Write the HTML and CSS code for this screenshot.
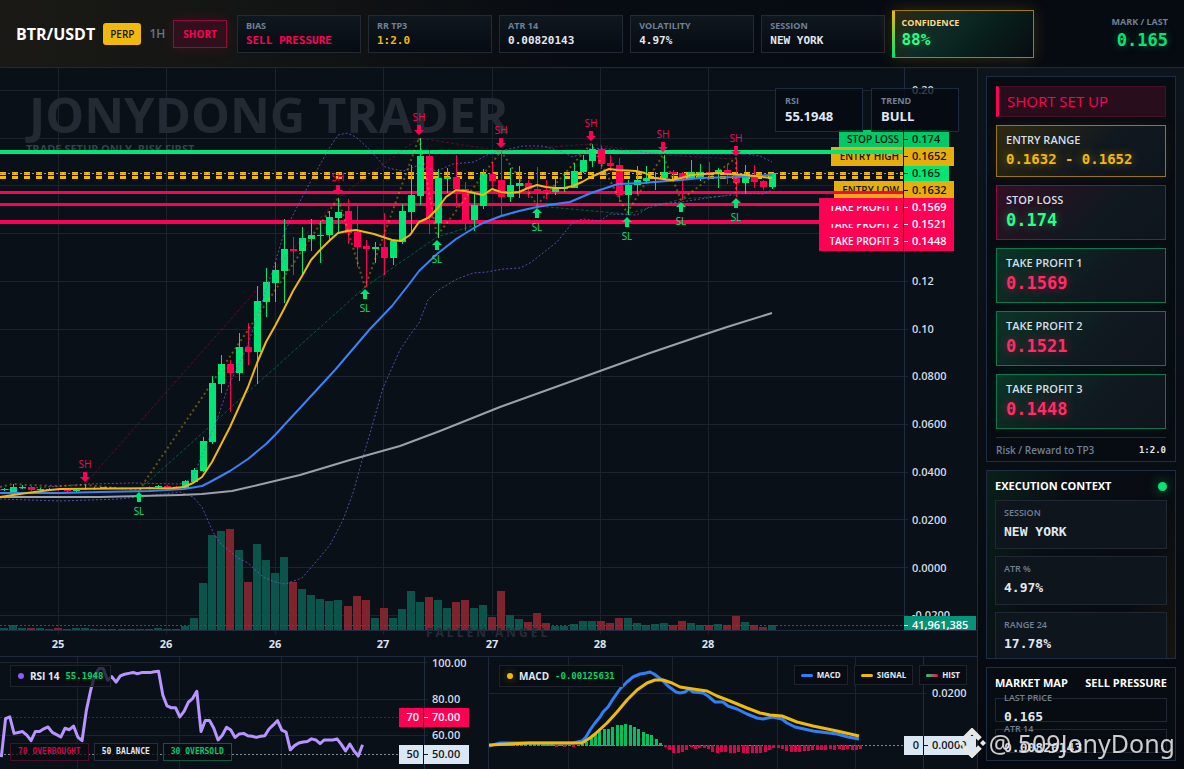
FILE: index.html
```html
<!DOCTYPE html>
<html lang="en">
<head>
    <meta charset="UTF-8">
    <meta name="viewport" content="width=device-width, initial-scale=1.0">
    <title>BTR/USDT Trader</title>
    <link rel="stylesheet" href="styles.css">
</head>
<body>
    <header class="topbar">
        <div class="brand">
            <h1 class="pair">BTR/USDT</h1>
            <span class="perp">PERP</span>
            <span class="timeframe">1H</span>
            <span class="side">SHORT</span>
        </div>
        <div class="stats">
            <div class="stat"><span class="label">BIAS</span><b class="red">SELL PRESSURE</b></div>
            <div class="stat"><span class="label">RR TP3</span><b class="yellow">1:2.0</b></div>
            <div class="stat"><span class="label">ATR 14</span><b>0.00820143</b></div>
            <div class="stat"><span class="label">VOLATILITY</span><b>4.97%</b></div>
            <div class="stat"><span class="label">SESSION</span><b>NEW YORK</b></div>
            <div class="stat confidence"><span class="label">CONFIDENCE</span><b>88%</b></div>
        </div>
        <div class="last">
            <span class="label">MARK / LAST</span>
            <b>0.165</b>
        </div>
    </header>

    <main class="layout">
        <section class="left">
            <div class="chart">
                <svg id="price-chart" viewBox="0 0 977 588" preserveAspectRatio="xMinYMin meet"></svg>
                <div class="readouts">
                    <div class="readout"><span class="label">RSI</span><b>55.1948</b></div>
                    <div class="readout"><span class="label">TREND</span><b>BULL</b></div>
                </div>
            </div>
            <div class="indicators">
                <div class="pane">
                    <svg id="rsi-chart" viewBox="0 0 488 112" preserveAspectRatio="xMinYMin meet"></svg>
                    <div class="pane-title"><i class="dot purple-dot"></i>RSI 14 <b>55.1948</b></div>
                    <div class="levels">
                        <span class="level overbought">70 OVERBOUGHT</span>
                        <span class="level">50 BALANCE</span>
                        <span class="level oversold">30 OVERSOLD</span>
                    </div>
                </div>
                <div class="pane macd">
                    <svg id="macd-chart" viewBox="0 0 488 112" preserveAspectRatio="xMinYMin meet"></svg>
                    <div class="pane-title"><i class="dot yellow-dot"></i>MACD <b>-0.00125631</b></div>
                    <div class="legend">
                        <span><i class="key key-macd"></i>MACD</span>
                        <span><i class="key key-signal"></i>SIGNAL</span>
                        <span><i class="key key-hist"></i>HIST</span>
                    </div>
                </div>
            </div>
        </section>

        <aside class="sidebar">
            <section class="panel setup">
                <h2 class="setup-title">SHORT SET UP</h2>
                <div class="card entry"><span>ENTRY RANGE</span><b>0.1632 - 0.1652</b></div>
                <div class="card stop"><span>STOP LOSS</span><b>0.174</b></div>
                <div class="card profit"><span>TAKE PROFIT 1</span><b>0.1569</b></div>
                <div class="card profit"><span>TAKE PROFIT 2</span><b>0.1521</b></div>
                <div class="card profit"><span>TAKE PROFIT 3</span><b>0.1448</b></div>
                <div class="risk"><span>Risk / Reward to TP3</span><b>1:2.0</b></div>
            </section>
            <section class="panel context">
                <div class="panel-head"><h3>EXECUTION CONTEXT</h3><i class="live"></i></div>
                <div class="box"><span>SESSION</span><b>NEW YORK</b></div>
                <div class="box"><span>ATR %</span><b>4.97%</b></div>
                <div class="box"><span>RANGE 24</span><b>17.78%</b></div>
            </section>
            <section class="panel market">
                <div class="panel-head"><h3>MARKET MAP</h3><h3>SELL PRESSURE</h3></div>
                <div class="box"><span>LAST PRICE</span><b>0.165</b></div>
                <div class="box"><span>ATR 14</span><b>0.00820143</b></div>
            </section>
        </aside>
    </main>

    <div class="handle">
        <svg width="28" height="30" viewBox="0 0 28 30">
            <path d="M6 11 L14 3 L22 11 M6 19 L14 27 L22 19" fill="none" stroke="#e8e8e8" stroke-width="5"/>
            <path d="M14 11 L18 15 L14 19 L10 15 Z M3 12 L6 15 L3 18 L0 15 Z M25 12 L28 15 L25 18 L22 15 Z" fill="#e8e8e8"/>
        </svg>
        <span>@ 509JonyDong</span>
    </div>

    <script src="chart.js"></script>
</body>
</html>
```

FILE: styles.css
```css
* {
    box-sizing: border-box;
}

body {
    margin: 0;
    height: 100vh;
    display: grid;
    grid-template-rows: 68px minmax(0, 1fr);
    background: #060a11;
    color: #e2e8f0;
    font-family: "Trebuchet MS", "Open Sans", "Noto Sans", sans-serif;
    font-size: 11px;
    overflow: hidden;
}

h1, h2, h3 {
    margin: 0;
}

.label {
    color: #718096;
    font-size: 9px;
    line-height: 12px;
    font-weight: 700;
}

.red { color: #ff0055; }
.yellow { color: #f0b90b; }

/* Top bar */
.topbar {
    display: grid;
    grid-template-columns: auto minmax(0, 1fr) 124px;
    align-items: center;
    gap: 10px;
    padding: 0 16px;
    border-bottom: 1px solid #1f293d;
    background: linear-gradient(90deg, #1a1915 0%, #131514 22%, #070b12 50%, #060a11 100%);
}

.brand {
    display: flex;
    align-items: center;
    gap: 8px;
}

.pair {
    color: #fff;
    font-size: 16px;
    font-weight: 700;
}

.perp {
    padding: 0 7px;
    border-radius: 3px;
    background: #f0b90b;
    color: #15130a;
    font-size: 10px;
    font-weight: 600;
    line-height: 22px;
}

.timeframe {
    color: #64748b;
    font-size: 12px;
    font-weight: 600;
}

.side {
    padding: 0 9px;
    border: 1px solid #98093d;
    background: #31101d;
    color: #ff0055;
    font-size: 10px;
    font-weight: 700;
    line-height: 26px;
    box-shadow: 0 0 14px rgba(255, 0, 85, 0.15);
}

.stats {
    display: grid;
    grid-template-columns: repeat(5, minmax(0, 1fr)) minmax(0, 1.14fr);
    align-items: center;
    gap: 7px;
}

.stat {
    display: flex;
    flex-direction: column;
    height: 38px;
    padding: 4px 8px;
    border: 1px solid #232a36;
    background: linear-gradient(180deg, #0f171f, #070b12);
}

.stat b {
    font-family: "DejaVu Sans Mono", monospace;
    font-size: 11px;
    line-height: 18px;
}

.confidence {
    height: 48px;
    padding: 6px 8px 6px 6px;
    border: 1px solid #a07c10;
    border-left: 3px solid #a07c10;
    background: linear-gradient(135deg, #2f2813 0%, #0f2b26 35%, #08201c 60%, #080c12 100%);
    box-shadow: 0 0 16px rgba(240, 185, 11, 0.2);
    position: relative;
}

.confidence::before {
    content: "";
    position: absolute;
    inset: 0 auto 0 -3px;
    width: 3px;
    background: linear-gradient(180deg, #f0b90b, #00e676);
}

.confidence .label {
    color: #ffd980;
}

.confidence b {
    color: #2bff88;
    font-size: 16px;
    line-height: 22px;
    text-shadow: 0 0 8px rgba(0, 230, 118, 0.4);
}

.last {
    display: flex;
    flex-direction: column;
    align-items: flex-end;
}

.last b {
    color: #00e676;
    font-family: "DejaVu Sans Mono", monospace;
    font-size: 17px;
    line-height: 24px;
    text-shadow: 0 0 10px rgba(0, 230, 118, 0.4);
}

/* Layout */
.layout {
    display: grid;
    grid-template-columns: minmax(0, 1fr) 207px;
    min-height: 0;
}

.left {
    display: grid;
    grid-template-rows: minmax(0, 1fr) 113px;
    min-height: 0;
    background: #0a1018;
}

.chart, .pane {
    position: relative;
    min-width: 0;
    min-height: 0;
    overflow: hidden;
}

.chart svg, .pane svg {
    display: block;
    width: 100%;
    height: 100%;
}

.readouts {
    position: absolute;
    top: 20px;
    right: 18px;
    display: flex;
    gap: 8px;
}

.readout {
    display: flex;
    flex-direction: column;
    width: 88px;
    height: 44px;
    padding: 6px 9px;
    border: 1px solid #1e2a3d;
    background: rgba(6, 9, 17, 0.75);
}

.readout b {
    font-size: 13px;
    line-height: 18px;
}

.indicators {
    display: grid;
    grid-template-columns: minmax(0, 488fr) minmax(0, 489fr);
    border-top: 1px solid #1f293d;
}

.macd {
    border-left: 1px solid #1f293d;
}

.pane-title {
    position: absolute;
    top: 8px;
    left: 10px;
    display: flex;
    align-items: center;
    gap: 6px;
    padding: 0 7px;
    border: 1px solid #1e242d;
    background: rgba(8, 12, 18, 0.75);
    font-size: 10px;
    font-weight: 700;
    line-height: 20px;
}

.pane-title b {
    color: #00d66b;
    font-family: "DejaVu Sans Mono", monospace;
    font-size: 9px;
}

.dot {
    width: 6px;
    height: 6px;
    border-radius: 50%;
}

.purple-dot { background: #8b5cf6; }
.yellow-dot {
    background: #f0b90b;
    box-shadow: 0 0 8px rgba(240, 185, 11, 0.5);
}

.levels {
    position: absolute;
    left: 10px;
    bottom: 8px;
    display: flex;
    gap: 5px;
}

.level {
    padding: 0 7px;
    border: 1px solid #262d38;
    background: rgba(8, 12, 18, 0.75);
    font-family: "DejaVu Sans Mono", monospace;
    font-size: 8px;
    font-weight: 700;
    line-height: 16px;
}

.overbought {
    border-color: #4a0e28;
    color: #c8064a;
}

.oversold {
    border-color: #0b5a3a;
    color: #00c968;
}

.legend {
    position: absolute;
    top: 8px;
    right: 10px;
    display: flex;
    gap: 6px;
}

.legend span {
    display: flex;
    align-items: center;
    gap: 4px;
    padding: 0 6px;
    border: 1px solid #1e242d;
    background: #080c12;
    font-size: 8px;
    font-weight: 700;
    line-height: 18px;
}

.key {
    width: 12px;
    height: 3px;
    border-radius: 2px;
}

.key-macd { background: #2f81f7; }
.key-signal { background: #f0b90b; }
.key-hist { background: linear-gradient(90deg, #00e676, #ff0055); }

/* Sidebar */
.sidebar {
    display: grid;
    grid-template-rows: auto minmax(0, 2fr) minmax(0, 1fr);
    gap: 8px;
    min-height: 0;
    padding: 8px;
    border-left: 1px solid #1f293d;
    background: linear-gradient(180deg, #0d141c, #05080f);
}

.panel {
    min-height: 0;
    border: 1px solid #1f2d44;
    background: #070b12;
    overflow: hidden;
}

.setup {
    display: flex;
    flex-direction: column;
    gap: 8px;
    padding: 9px 9px 3px;
}

.setup-title {
    padding-left: 8px;
    border: 1px solid #47102a;
    border-left: 3px solid #ff0055;
    background: #280d1c;
    color: #ff0055;
    font-size: 15px;
    font-weight: 500;
    line-height: 29px;
}

.card {
    display: flex;
    flex-direction: column;
    padding: 5px 9px 6px;
    border: 1px solid;
}

.card span {
    color: #d5deea;
    font-size: 11px;
    font-weight: 600;
    line-height: 17px;
}

.card b {
    font-family: "DejaVu Sans Mono", monospace;
    font-size: 17px;
    line-height: 25px;
}

.entry {
    border-color: #98770f;
    background: linear-gradient(135deg, #30290f 0%, #101820 60%, #0e151d 100%);
    box-shadow: 0 0 14px rgba(240, 185, 11, 0.08);
}

.entry b {
    color: #f0b90b;
    font-size: 14px;
    line-height: 22px;
    text-shadow: 0 0 10px rgba(240, 185, 11, 0.5);
}

.stop {
    border-color: #8d0c3c;
    background: linear-gradient(135deg, #321023 0%, #101820 60%, #0e151d 100%);
}

.stop b {
    color: #2bff88;
    text-shadow: 0 0 10px rgba(0, 230, 118, 0.5);
}

.profit {
    border-color: #0a7a4b;
    background: linear-gradient(135deg, #0b3526 0%, #101820 60%, #0e151d 100%);
    box-shadow: 0 0 14px rgba(0, 230, 118, 0.06);
}

.profit b {
    color: #ff2d64;
    text-shadow: 0 0 10px rgba(255, 0, 85, 0.5);
}

.risk {
    display: flex;
    justify-content: space-between;
    align-items: center;
    padding-top: 4px;
    border-top: 1px solid #1f2d44;
    color: #718096;
    font-size: 10px;
    font-weight: 600;
    line-height: 16px;
}

.risk b {
    color: #e2e8f0;
    font-family: "DejaVu Sans Mono", monospace;
    font-size: 9px;
}

.context, .market {
    padding: 7px 8px;
}

.context {
    background: linear-gradient(110deg, #08201a 0%, #080e14 35%, #080c12 75%, #17140d 100%);
}

.panel-head {
    display: flex;
    justify-content: space-between;
    align-items: center;
    margin-bottom: 6px;
}

.panel-head h3 {
    color: #fff;
    font-size: 11px;
    font-weight: 700;
    line-height: 16px;
}

.live {
    width: 9px;
    height: 9px;
    border-radius: 50%;
    background: #00e676;
    box-shadow: 0 0 12px rgba(0, 230, 118, 0.5);
}

.box {
    display: flex;
    flex-direction: column;
    justify-content: center;
    height: 49px;
    margin-bottom: 7px;
    padding: 0 8px 4px;
    border: 1px solid #212833;
    background: #0e151d;
}

.box span {
    color: #718096;
    font-size: 9px;
    font-weight: 600;
    line-height: 18px;
}

.box b {
    font-family: "DejaVu Sans Mono", monospace;
    font-size: 13px;
    line-height: 20px;
}

.market {
    display: grid;
    grid-template-rows: auto minmax(0, 1fr) minmax(0, 1fr);
    gap: 7px;
}

.market .panel-head {
    margin: 0;
}

.market .box {
    height: auto;
    min-height: 0;
    margin: 0;
    background: transparent;
}

/* Author handle floating over the page corner */
.handle {
    position: fixed;
    right: 9px;
    bottom: 9px;
    display: flex;
    align-items: center;
    gap: 3px;
    color: rgba(255, 255, 255, 0.8);
    font-family: "Noto Sans", sans-serif;
    font-size: 25px;
    line-height: 34px;
    text-shadow: 0 0 2px rgba(0, 0, 0, 0.6);
}
```

FILE: chart.js
```js
const GREEN = '#00e676';
const RED = '#ff0055';
const YELLOW = '#f0b90b';
const FONT = '"Trebuchet MS", "Open Sans", "Noto Sans", sans-serif';

function add(svg, name, attrs, text) {
    const el = document.createElementNS('http://www.w3.org/2000/svg', name);
    for (const key in attrs) {
        el.setAttribute(key, attrs[key]);
    }
    if (text !== undefined) {
        el.textContent = text;
    }
    svg.appendChild(el);
    return el;
}

function rect(svg, x, y, width, height, fill) {
    add(svg, 'rect', { x, y, width, height, fill });
}

// crisp horizontal / vertical rules
function hline(svg, y, x1, x2, color, width, dash) {
    add(svg, 'path', { d: `M${x1} ${y}H${x2}`, stroke: color, 'stroke-width': width || 1, 'stroke-dasharray': dash || 'none' });
}

function vline(svg, x, y1, y2, color) {
    add(svg, 'path', { d: `M${x} ${y1}V${y2}`, stroke: color });
}

function line(svg, points, color, width, dash, opacity) {
    add(svg, 'polyline', {
        points, fill: 'none', stroke: color, 'stroke-width': width,
        'stroke-linejoin': 'round', 'stroke-dasharray': dash || 'none', opacity: opacity || 1
    });
}

function label(svg, x, y, text, color, size, weight, anchor) {
    return add(svg, 'text', {
        x, y, fill: color, 'font-size': size, 'font-weight': weight || 600,
        'text-anchor': anchor || 'start', 'font-family': FONT
    }, text);
}

const GRID = '#1d232d';
const AXIS = '#1f2b40';

/* ---------- price chart ---------- */
// prices are kept as page rows, the svg starts 68px below the top bar
const TOP = 68;

// [body top, body bottom, high, low, up, volume height]
const candles = [
    [489, 490, 488, 491, 1, 2], [487, 493, 484, 494, 1, 5], [487, 488, 485, 489, 1, 2], [487, 490, 486, 491, 0, 2],
    [489, 490, 488, 491, 1, 2], [489, 490, 488, 491, 1, 1], [489, 490, 488, 491, 0, 2], [490, 491, 489, 492, 0, 1],
    [490, 491, 488, 492, 1, 2], [488, 489, 485, 490, 1, 2], [488, 489, 487, 490, 1, 1], [487, 488, 487, 489, 1, 1],
    [487, 488, 487, 489, 0, 1], [488, 489, 487, 490, 0, 1], [488, 489, 488, 490, 0, 1], [488, 489, 488, 490, 1, 1],
    [487, 489, 486, 490, 0, 1], [486, 487, 485, 488, 1, 2], [486, 488, 485, 489, 0, 1], [487, 489, 486, 490, 0, 1],
    [481, 488, 480, 489, 1, 4], [470, 482, 468, 482, 1, 12], [441, 471, 437, 472, 1, 47], [383, 442, 376, 444, 1, 95],
    [364, 384, 355, 393, 1, 99], [364, 373, 360, 412, 0, 101], [347, 373, 333, 381, 1, 80], [347, 352, 323, 365, 0, 48],
    [301, 352, 286, 384, 1, 86], [282, 302, 268, 317, 1, 70], [270, 283, 262, 302, 1, 57], [249, 271, 219, 303, 1, 73],
    [249, 251, 237, 275, 0, 48], [238, 251, 227, 274, 1, 41], [235, 239, 219, 251, 1, 35], [235, 236, 221, 263, 1, 31],
    [217, 235, 211, 242, 1, 29], [212, 218, 198, 234, 1, 30], [211, 233, 199, 244, 0, 24], [232, 247, 206, 267, 0, 34],
    [246, 249, 240, 287, 0, 30], [247, 249, 242, 263, 1, 12], [247, 258, 213, 275, 0, 22], [241, 258, 239, 265, 1, 12],
    [211, 242, 204, 244, 1, 21], [195, 212, 165, 233, 1, 39], [156, 196, 138, 205, 1, 28], [156, 218, 150, 234, 0, 33],
    [178, 223, 169, 238, 1, 30], [177, 179, 168, 193, 1, 22], [177, 189, 155, 208, 0, 28], [189, 220, 182, 231, 0, 30],
    [205, 220, 193, 231, 1, 22], [174, 206, 169, 209, 1, 25], [174, 181, 162, 189, 0, 13], [180, 197, 151, 216, 0, 39],
    [185, 197, 168, 202, 1, 15], [183, 186, 166, 198, 1, 11], [183, 189, 180, 198, 0, 8], [189, 191, 167, 205, 0, 17],
    [190, 191, 180, 199, 0, 7], [188, 192, 179, 195, 1, 4], [187, 189, 174, 192, 1, 4], [171, 188, 163, 188, 1, 6],
    [160, 172, 155, 173, 1, 9], [149, 161, 144, 167, 1, 9], [149, 164, 146, 169, 0, 9], [163, 166, 155, 171, 0, 7],
    [165, 195, 158, 202, 0, 12], [185, 195, 180, 215, 1, 12], [180, 185, 166, 194, 1, 7], [178, 181, 166, 183, 1, 5],
    [177, 178, 172, 190, 1, 6], [172, 178, 155, 179, 1, 7], [172, 174, 170, 180, 0, 5], [173, 179, 172, 200, 0, 9],
    [172, 179, 160, 179, 1, 7], [172, 179, 164, 181, 1, 5], [172, 173, 162, 179, 0, 5], [170, 173, 168, 188, 1, 6],
    [170, 175, 164, 184, 0, 5], [174, 183, 159, 197, 0, 14], [177, 183, 165, 194, 1, 8], [177, 182, 165, 188, 0, 5],
    [181, 187, 180, 190, 0, 3], [173, 187, 173, 189, 1, 5]
];

function drawPrice() {
    const root = document.getElementById('price-chart');
    const svg = add(root, 'g', { transform: `translate(0 ${-TOP})` });

    for (let i = 0; i < 12; i++) {
        hline(svg, Math.round(90 + 47.7 * i) + 0.5, 0, 908, GRID);
    }
    [58, 166, 275, 383, 492, 600, 708].forEach((x, i) => {
        vline(svg, x + 0.5, TOP, 634, GRID);
        label(svg, x, 648, ['25', '26', '26', '27', '27', '28', '28'][i], '#dbe4f0', 11, 700, 'middle');
    });

    label(svg, 29, 133, 'JONYDONG TRADER', '#242a33', 49, 700);
    label(svg, 26, 153, 'TRADE SETUP ONLY. RISK FIRST.', '#3a414b', 11, 700);

    // volume
    candles.forEach((c, i) => {
        const x = Math.round(4 + 9.04 * i);
        rect(svg, x - 4, 630 - c[5], 8, c[5], c[4] ? '#0b544c' : '#7f232f');
    });
    hline(svg, 625.5, 0, 904, '#0d6b5b', 1, '2 2');

    // level tags
    [
        [839, 130, 19, 949, 'STOP LOSS', '0.174', '#00c968', '#06130c', 143],
        [831, 147, 19, 954, 'ENTRY HIGH', '0.1652', '#e5ae0d', '#15130a', 160],
        [904, 166, 15, 949, '', '0.165', GREEN, '#06130c', 177],
        [834, 181, 17, 954, 'ENTRY LOW', '0.1632', '#e5ae0d', '#15130a', 194],
        [819, 198, 19, 954, 'TAKE PROFIT 1', '0.1569', RED, '#fff', 211],
        [819, 215, 19, 954, 'TAKE PROFIT 2', '0.1521', RED, '#fff', 228],
        [819, 232, 19, 954, 'TAKE PROFIT 3', '0.1448', RED, '#fff', 245]
    ].forEach(([x, y, h, right, name, price, fill, ink, base]) => {
        rect(svg, x, y, right - x, h, fill);
        label(svg, 899, base, name, ink, 10, 600, 'end');
        label(svg, 912, base, price, ink, 11, 600);
        hline(svg, base - 4 + 0.5, 904, 908, ink);
    });

    // setup levels
    hline(svg, 152, 0, 904, GREEN, 4);
    hline(svg, 173.5, 0, 904, YELLOW, 3, '6 6');
    hline(svg, 177.5, 0, 904, YELLOW, 3, '6 6');
    hline(svg, 173.5, 0, 904, GREEN, 1, '2 2');
    hline(svg, 192.5, 0, 904, RED, 3);
    hline(svg, 204.5, 0, 904, RED, 3);
    hline(svg, 222, 0, 904, RED, 4);

    // candles
    candles.forEach((c, i) => {
        const x = Math.round(4 + 9.04 * i);
        const color = c[4] ? GREEN : RED;
        rect(svg, x, c[2], 1, c[3] - c[2], color);
        rect(svg, x - 3, c[0], 7, Math.max(1, c[1] - c[0]), color);
    });

    // bollinger bands
    line(svg, '0,490 47,487 90,484 133,483 180,484 193,478 200,460 217,420 228,387 247,347 257,317 267,287 275,263 284,233 297,207 313,177 330,147 338,135 347,133 356,137 370,150 385,167 393,169 403,171 419,165 437,171 453,164 474,162 487,155 501,151 523,146 543,146 560,151 573,157 583,153 591,148 609,149 647,153 683,154 747,154 760,156 772,162', '#7c5cd6', 1, '2 2', 0.75);
    line(svg, '0,499 60,501 120,499 180,492 193,497 202,507 213,532 220,543 238,558 248,563 263,577 275,582 285,584 302,578 315,563 330,545 343,520 353,493 363,457 371,430 383,388 400,350 410,335 419,323 428,300 437,291 457,279 473,273 487,272 503,269 520,268 530,263 543,253 557,242 573,222 583,219 600,221 610,214 637,215 652,205 681,202 707,198 723,196 736,193 763,194 772,190', '#7c5cd6', 1, '2 2', 0.75);

    // swing connections
    line(svg, '0,487 13,484 27,485 60,486 85,485 139,490 338,198 365,287 419,138 437,236 501,151 537,205 591,144 627,213 663,155 681,200 736,158 736,193', YELLOW, 2, '2 3', 0.4);
    line(svg, '85,484 338,198 419,138 501,151 591,144 663,155 736,159', RED, 1, '3 2', 0.35);
    line(svg, '139,490 365,287 437,237 537,206 627,214 681,199 736,195', GREEN, 1, '3 2', 0.35);

    // moving averages
    line(svg, '0,497 100,497 180,495 202,494 232,491 258,485 300,475 350,460 400,446 440,431 500,407 550,389 600,371 650,353 700,336 727,327 772,313', '#9aa1ab', 2);
    line(svg, '0,493 60,493 100,492 150,491 184,489 202,486 210,482 230,471 248,459 266,444 275,435 300,408 335,370 370,329 392,306 410,283 419,271 437,254 456,239 474,228 483,223 501,216 519,211 537,207 555,204 570,202 591,193 609,187 618,184 645,183 654,182 681,180 700,178 736,177 772,175', '#3b82f6', 2);
    line(svg, '0,497 13,495 27,493 50,490 60,489 173,488 184,487 193,483 202,477 212,462 230,427 248,387 257,363 266,342 275,326 284,309 293,291 302,276 311,260 320,250 329,241 338,233 347,231 356,230 365,232 374,234 383,237 392,240 401,241 410,235 419,222 428,218 437,209 446,197 456,190 465,191 474,193 483,195 492,189 501,192 510,193 519,192 528,188 537,185 546,187 555,188 564,188 573,186 582,182 591,177 600,173 609,169 618,170 636,171 645,173 654,178 672,180 681,178 691,175 718,173 727,174 745,175 772,178', YELLOW, 2);

    // swing highs and lows
    [[85, 482], [338, 195], [419, 135], [501, 148], [591, 141], [663, 152], [736, 156]].forEach(([x, y]) => {
        add(svg, 'path', { d: `M${x} ${y}l-5 -5h3v-5h4v5h3z`, fill: RED });
        label(svg, x, y - 14, 'SH', RED, 10, 500, 'middle');
    });
    [[139, 492], [365, 289], [437, 240], [537, 208], [627, 217], [681, 202], [736, 198]].forEach(([x, y]) => {
        add(svg, 'path', { d: `M${x} ${y}l-5 5h3v5h4v-5h3z`, fill: GREEN });
        label(svg, x, y + 23, 'SL', GREEN, 10, 500, 'middle');
    });

    // axes
    [['0.20', 94], ['0.12', 285], ['0.10', 333], ['0.0800', 380], ['0.0600', 428], ['0.0400', 476], ['0.0200', 524], ['0.0000', 572], ['-0.0200', 619]].forEach(([text, y]) => {
        label(svg, 912, y, text, '#d3dbe6', 11, 600);
    });
    vline(svg, 904.5, TOP, 130, AXIS);
    vline(svg, 903.5, 130, 251, '#0a1018');
    vline(svg, 904.5, 251, 630, AXIS);
    rect(svg, 904, 616, 72, 14, '#089378');
    hline(svg, 625.5, 904, 908, '#fff');
    label(svg, 912, 629, '41,961,385', '#fff', 11, 600);
    hline(svg, 630.5, 0, 977, AXIS);

    const mark = label(svg, 426, 637, 'FALLEN ANGEL', '#262c36', 12, 700);
    mark.setAttribute('letter-spacing', '3');
}

/* ---------- rsi ---------- */
const rsi = [
    48, 69, 70, 61, 61.5, 62, 60, 57, 62, 62, 63.5, 64.5, 61.5, 60.3, 59, 63.8, 63, 65, 59, 57, 73.4, 84.3,
    93, 96.4, 96.5, 90, 92, 89, 92.4, 93.3, 93.8, 94.3, 93.6, 94.2, 94.2, 94.2, 94.7, 95, 82, 76, 75, 75, 70,
    73, 78, 80, 84, 62, 68, 68, 63.8, 57.4, 60, 64.3, 62.8, 58.8, 60.7, 61, 59.7, 59.4, 58.8, 59.4, 59.7,
    63.4, 65.6, 68, 62.8, 61.7, 52, 54.3, 55.7, 56.3, 56.6, 58, 57.4, 55.4, 57.4, 57.4, 57.4, 58, 55, 51.4,
    55.2, 51.4, 48.6, 54.8
];

function drawRsi() {
    const svg = document.getElementById('rsi-chart');
    [5, 42, 78].forEach(y => hline(svg, y + 0.5, 0, 428, GRID));
    [77, 179, 281, 357].forEach(x => vline(svg, x + 0.5, 0, 112, GRID));
    vline(svg, 424.5, 0, 112, AXIS);
    hline(svg, 60.5, 0, 399, '#7a0c35', 1, '2 2');
    hline(svg, 97.5, 0, 399, '#828b98', 1, '2 2');
    line(svg, rsi.map((v, i) => `${1.3 + 4.25 * i},${5 + (100 - v) * 1.83}`).join(' '), '#b794ff', 3);
    label(svg, 432, 10, '100.00', '#d3dbe6', 11);
    label(svg, 432, 46, '80.00', '#d3dbe6', 11);
    label(svg, 432, 82, '60.00', '#d3dbe6', 11);
    tag(svg, 399, 424, 469, 51, '70', '70.00', RED, '#fff');
    tag(svg, 399, 424, 469, 88, '50', '50.00', '#dbe7f5', '#111820');
}

function tag(svg, left, axis, right, y, name, value, fill, ink) {
    rect(svg, left, y, right - left, 19, fill);
    vline(svg, axis - 0.5, y, y + 19, '#0a1018');
    hline(svg, y + 9.5, axis, axis + 4, ink);
    label(svg, axis - 5, y + 13, name, ink, 11, 600, 'end');
    label(svg, axis + 8, y + 13, value, ink, 11, 600);
}

/* ---------- macd ---------- */
const hist = [
    -1, 2, 2, 2, 2, 2, 2, 2, 2, 2, 2, 2, 2, 2, 2, -1, 1, -1, 1, -1, 1, 2, 4, 9, 13, 15, 17, 17, 19, 21, 21, 22,
    21, 19, 17, 14, 12, 11, 7, 3, -1, -4, -7, -7, -6, -4, -1, -3, -2, -2, -3, -6, -7, -6, -6, -7, -7, -6, -7,
    -7, -7, -7, -7, -6, -4, -2, -2, -3, -5, -6, -6, -6, -5, -5, -4, -4, -4, -4, -3, -4, -3, -4, -3, -4, -4, -3
];

function drawMacd() {
    const svg = document.getElementById('macd-chart');
    hline(svg, 36.5, 0, 438, GRID);
    [79, 183, 288, 366].forEach(x => vline(svg, x + 0.5, 0, 112, GRID));
    vline(svg, 434.5, 0, 112, AXIS);
    hline(svg, 88.5, 0, 415, '#7d8694', 1, '2 2');
    hist.forEach((h, i) => {
        rect(svg, Math.round(0.5 + 4.35 * i), h > 0 ? 89 - h : 88, 3, Math.abs(h) + (h < 0 ? 1 : 0), h > 0 ? '#00c060' : '#d6064c');
    });
    line(svg, '0,89 11,86 84,86 93,84 97,80 101,73 106,66 111,60 114,55 119,50 124,42 131,32 138,25 144,20 151,17 157,16 161,15 165,17 173,23 179,29 187,35 191,36 196,35 200,32 204,35 214,36 219,39 226,45 234,45 239,49 248,52 258,57 268,61 274,62 283,60 293,62 298,66 306,70 324,74 348,77 359,80 370,82', '#2f81f7', 3);
    line(svg, '0,88 41,86 93,86 101,81 106,77 118,66 128,55 138,43 148,33 158,26 166,23 174,23 183,26 191,30 204,32 218,34 228,39 241,44 258,51 271,56 281,58 293,59 308,65 324,69 348,74 370,79', YELLOW, 3);
    label(svg, 443, 40, '0.0200', '#d3dbe6', 11);
    tag(svg, 415, 435, 487, 79, '0', '0.0000', '#dbe7f5', '#111820');
}

drawPrice();
drawRsi();
drawMacd();
```
